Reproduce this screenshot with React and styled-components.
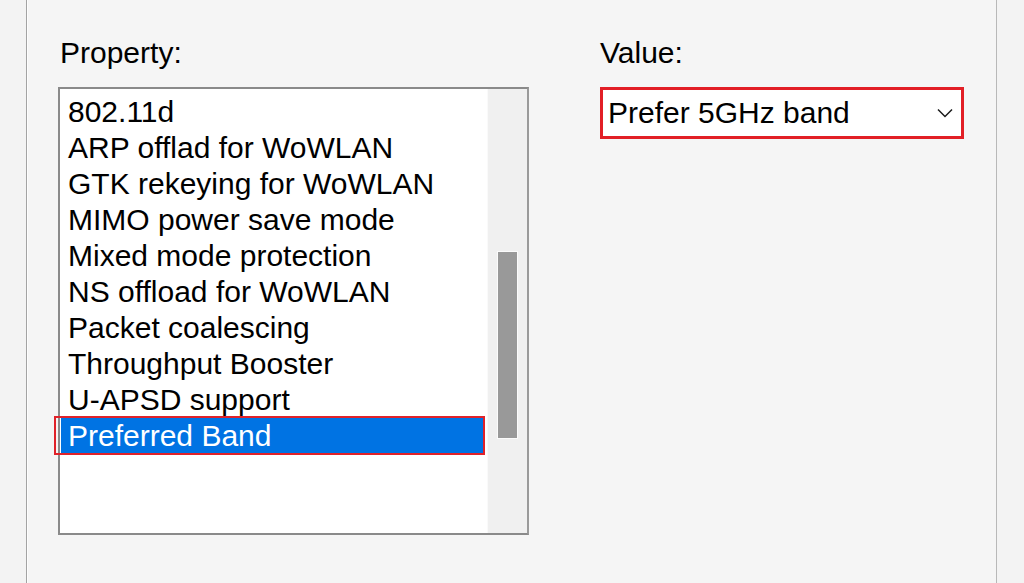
import React from 'react';
import styled, { createGlobalStyle } from 'styled-components';

const GlobalStyle = createGlobalStyle`
  html, body {
    margin: 0;
    padding: 0;
    background: #f3f3f3;
    font-family: "Liberation Sans", Arial, sans-serif;
    color: #000;
  }
`;

const Page = styled.div`
  width: 1024px;
  height: 583px;
  overflow: hidden;
  display: flex;
`;

const Panel = styled.div`
  margin-left: 26px;
  width: 971px;
  height: 583px;
  background: #f5f5f5;
  border-left: 1px solid #a3a3a3;
  border-right: 1px solid #b8b8b8;
  box-shadow: inset 1px 0 0 #fdfdfd;
  padding: 36px 0 0 31px;
  box-sizing: border-box;
  display: grid;
  grid-template-columns: 471px 364px;
  column-gap: 71px;
  align-items: start;
`;

const Column = styled.div`
  display: flex;
  flex-direction: column;
  gap: 17px;
`;

const Label = styled.div`
  font-size: 30px;
  line-height: 34px;
  padding-left: ${p => p.$indent || 0}px;
`;

const ListBox = styled.div`
  width: 471px;
  height: 448px;
  box-sizing: border-box;
  border: 2px solid #8a8a8a;
  border-right-color: #9a9a9a;
  background: #fff;
  display: flex;
`;

const Items = styled.ul`
  flex: 1;
  list-style: none;
  margin: 0;
  padding: 5px 0 0 1px;
`;

const Item = styled.li`
  position: relative;
  height: 36px;
  line-height: 36px;
  font-size: 30px;
  padding-left: 7px;
  margin-right: 2px;
  white-space: nowrap;
  background: ${p => (p.$selected ? '#0073e3' : 'transparent')};
  color: ${p => (p.$selected ? '#fff' : '#000')};

  ${p =>
    p.$selected &&
    `
    &::after {
      content: '';
      position: absolute;
      left: -7px;
      right: 0;
      top: -2px;
      bottom: -1px;
      border: 2px solid #e0222a;
    }
  `}
`;

const Track = styled.div`
  width: 40px;
  background: #f0f0f0;
  border-left: 1px solid #fafafa;
  padding-top: 163px;
  box-sizing: border-box;
`;

const Thumb = styled.div`
  margin-left: 10px;
  width: 19px;
  height: 186px;
  background: #999;
  box-shadow: 0 0 0 1px #fbfbfb;
`;

const Select = styled.div`
  width: 364px;
  height: 52px;
  box-sizing: border-box;
  border: 3px solid #e21f26;
  background: #fff;
  display: flex;
  align-items: center;
  justify-content: space-between;
  padding: 0 8px 0 5px;
  font-size: 30px;
`;

const Chevron = () => (
  <svg width="16" height="10" viewBox="0 0 16 10">
    <path d="M1 1.5 L8 8.5 L15 1.5" fill="none" stroke="#1a1a1a" strokeWidth="1.5" />
  </svg>
);

const properties = [
  '802.11d',
  'ARP offlad for WoWLAN',
  'GTK rekeying for WoWLAN',
  'MIMO power save mode',
  'Mixed mode protection',
  'NS offload for WoWLAN',
  'Packet coalescing',
  'Throughput Booster',
  'U-APSD support',
  'Preferred Band',
];

export default function App() {
  return (
    <Page>
      <GlobalStyle />
      <Panel>
        <Column>
          <Label $indent={2}>Property:</Label>
          <ListBox>
            <Items>
              {properties.map(name => (
                <Item key={name} $selected={name === 'Preferred Band'}>
                  {name}
                </Item>
              ))}
            </Items>
            <Track>
              <Thumb />
            </Track>
          </ListBox>
        </Column>
        <Column>
          <Label>Value:</Label>
          <Select>
            <span>Prefer 5GHz band</span>
            <Chevron />
          </Select>
        </Column>
      </Panel>
    </Page>
  );
}
